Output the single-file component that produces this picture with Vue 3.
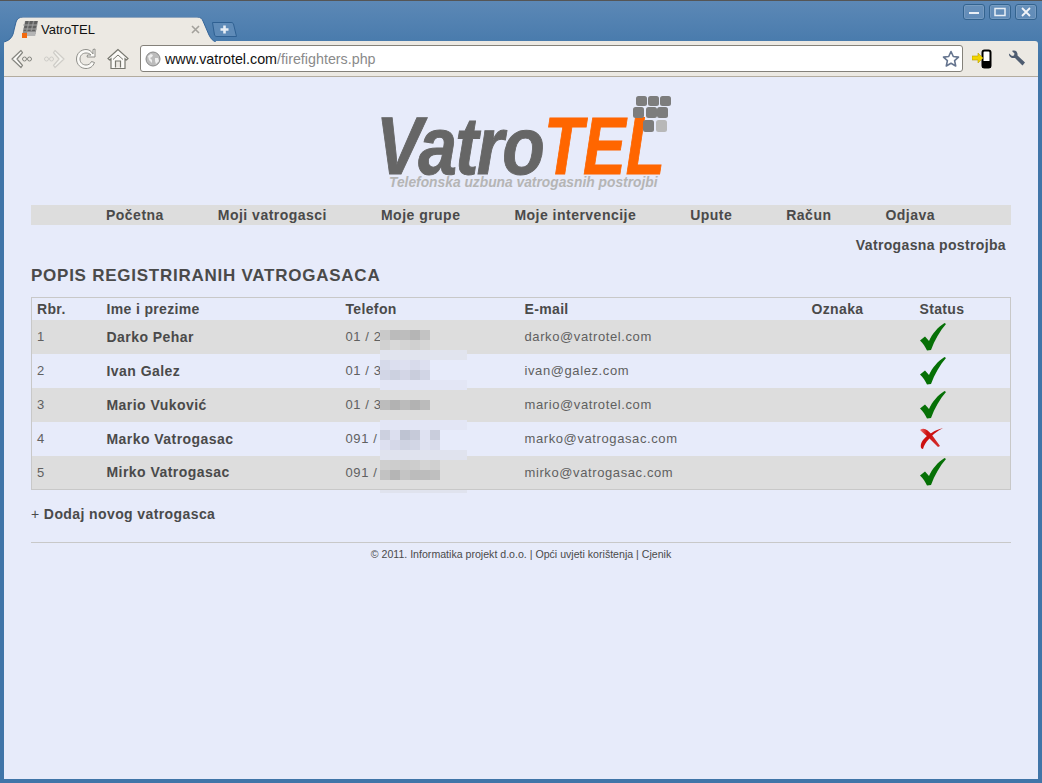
<template>
  <div class="window">
    <!-- Naslovna traka s karticama -->
    <div class="titlebar">
      <div class="tab">
        <svg class="tab-shape" width="212" height="25" viewBox="0 0 212 25">
          <path d="M0 25 C7 23 9 19 10 13 L12 5 C13 2 15 0 19 0 L193 0 C197 0 198 2 199 4 L205 18 C207 22 209 24 212 25" fill="#ece9e3" stroke="#34659a" stroke-width="1" />
        </svg>
        <svg class="favicon" width="16" height="17" viewBox="0 0 16 17">
          <path d="M3 0h13l-2.500 13H.5z" fill="#8c8c8c" />
          <path d="M3.500 0h3L4 10H1.500zM8 0h3L8.500 10h-3zM12.500 0H15.500L13 10h-3z" fill="#5f5f5f" />
          <path d="M1 7.500h14v1H1zM1 3.500h14v1H1z" fill="#a5a5a5" />
          <path d="M5 11h9l-.8 4H5z" fill="#b5b5b5" />
          <rect x="0" y="12" width="5" height="5" fill="#f26a10" />
        </svg>
        <span class="tab-title">VatroTEL</span>
        <svg class="tab-close" width="9" height="9" viewBox="0 0 9 9">
          <path d="M1 1l7 7M8 1l-7 7" stroke="#a3a19c" stroke-width="1.600" />
        </svg>
      </div>
      <div class="newtab">
        <svg width="25" height="15" viewBox="0 0 25 15">
          <path d="M.5 .5H19C20.500 .5 21 1 21.500 2L24.500 14.500H5C3.500 14.500 3 14 2.500 13Z" fill="#5f8bb8" stroke="#2f6092" />
          <path d="M12.500 3.500v8M8.500 7.500h8" stroke="#e8eef5" stroke-width="2.600" />
        </svg>
      </div>
      <div class="winbtns">
        <div class="winbtn"><svg width="12" height="10" viewBox="0 0 12 10"><path d="M1 6h10" stroke="#e9eff6" stroke-width="2" /></svg></div>
        <div class="winbtn"><svg width="12" height="10" viewBox="0 0 12 10"><rect x="1" y="1.500" width="10" height="7" fill="none" stroke="#e9eff6" stroke-width="1.500" /></svg></div>
        <div class="winbtn"><svg width="12" height="10" viewBox="0 0 12 10"><path d="M2 1l8 8M10 1l-8 8" stroke="#f2f5f9" stroke-width="1.800" /></svg></div>
      </div>
    </div>

    <!-- Alatna traka preglednika -->
    <div class="toolbar">
      <svg class="navicon" width="22" height="22" viewBox="0 0 22 22">
        <path d="M10 2.500L1 11l9 8.500 1.500-2L6 11l5.500-6.500z" fill="#fbfaf7" stroke="#85857f" stroke-width="1.200" stroke-linejoin="round" />
        <circle cx="13.500" cy="11" r="2" fill="none" stroke="#85857f" />
        <circle cx="18.500" cy="11" r="2" fill="none" stroke="#85857f" />
      </svg>
      <svg class="navicon" width="22" height="22" viewBox="0 0 22 22">
        <path d="M12 2.500l9 8.500-9 8.500-1.500-2L16 11 10.500 4.500z" fill="#f2f1ec" stroke="#cfcdc8" stroke-width="1.200" stroke-linejoin="round" />
        <circle cx="8.500" cy="11" r="2" fill="none" stroke="#cfcdc8" />
        <circle cx="3.500" cy="11" r="2" fill="none" stroke="#cfcdc8" />
      </svg>
      <svg class="navicon" width="22" height="22" viewBox="0 0 22 22">
        <path d="M18 6V1.500L20 1V9h-8l.5-2H16C14.500 5.500 13 5 11 5 7.500 5 5 7.500 5 11s2.500 6 6 6c2.500 0 4.500-1.200 5.500-3.500l3 1C18 18.500 15 20.500 11 20.500 5.800 20.500 1.500 16.500 1.500 11S5.800 1.500 11 1.500c3 0 5.300 1.500 7 4.500z" fill="#fbfaf7" stroke="#8f8f8a" />
      </svg>
      <svg class="navicon" width="22" height="22" viewBox="0 0 22 22">
        <path d="M11 1.500L1 10.500l1.500 1.500L4 10.800V20.500h14V10.800L19.500 12l1.500-1.500zM8.500 19.500V13h5v6.500" fill="#fbfaf7" stroke="#77776f" stroke-width="1.200" />
        <path d="M6 11.500L11 7l5 4.500" fill="none" stroke="#77776f" />
      </svg>
      <div class="omnibox">
        <svg width="16" height="16" viewBox="0 0 16 16">
          <circle cx="8" cy="8" r="7" fill="#bcbcbc" stroke="#8a8a8a" />
          <path d="M3 5l3-2 2 1-1 2-2 1 2 2v3L4 9zM10 7l3 0 1 3-3 3-1-3z" fill="#efefef" />
        </svg>
        <span class="url"><span class="url-host">www.vatrotel.com</span>/firefighters.php</span>
        <svg width="18" height="18" viewBox="0 0 18 18">
          <path d="M9 1.500l2.300 5 5.200.6-3.900 3.500 1.100 5.400L9 13.300 4.300 16l1.100-5.400L1.500 7.100l5.200-.6z" fill="#fff" stroke="#66758f" stroke-width="1.600" stroke-linejoin="round" />
        </svg>
      </div>
      <svg class="ext" width="20" height="20" viewBox="0 0 20 20">
        <rect x="10.500" y="1.500" width="8" height="17" rx="2" fill="#fff" stroke="#000" stroke-width="2" />
        <rect x="10" y="12" width="9" height="7" rx="1" fill="#000" />
        <path d="M0 8h6V5l5 5-5 5v-3H0z" transform="translate(0 -1)" fill="#f2d500" stroke="#b8a000" stroke-width=".6" />
      </svg>
      <svg class="wrench" width="18" height="18" viewBox="0 0 18 18">
        <path d="M1 3.500L4 6l2-.5.500-2L4 1C7 -.5 10 1.500 9.500 5.500L17 12.500 14.500 15.500 7 8C3.500 8.500 .5 6.500 1 3.500z" fill="#4e5c70" />
      </svg>
    </div>

    <!-- Sadržaj stranice -->
    <div class="page">
      <div class="logo">
        <span class="logo-word logo-vatro">Vatro</span>
        <span class="logo-word logo-tel">TEL</span>
        <svg class="logo-dots" width="38" height="36" viewBox="0 0 38 36">
          <g fill="#7d7d7d">
            <rect x="3" y="0" width="11" height="10" rx="2.500" />
            <rect x="15" y="0" width="11" height="10" rx="2.500" />
            <rect x="27" y="0" width="11" height="10" rx="2.500" />
            <rect x="0" y="11" width="11" height="11" rx="2.500" />
            <rect x="13" y="11" width="11" height="11" rx="2.500" />
            <rect x="24" y="11" width="11" height="11" rx="2.500" />
            <rect x="10" y="24" width="11" height="12" rx="2.500" />
          </g>
          <rect x="23" y="24" width="11" height="12" rx="2.500" fill="#b8b8b8" />
        </svg>
        <div class="logo-tag">Telefonska uzbuna vatrogasnih postrojbi</div>
      </div>

      <nav class="menu">
        <a v-for="item in menu" :key="item">{{ item }}</a>
      </nav>
      <div class="unit">Vatrogasna postrojba</div>
      <h1>POPIS REGISTRIRANIH VATROGASACA</h1>

      <div class="table-wrap">
        <table>
          <thead>
            <tr>
              <th class="c-nr">Rbr.</th>
              <th class="c-name">Ime i prezime</th>
              <th class="c-tel">Telefon</th>
              <th class="c-mail">E-mail</th>
              <th class="c-tag">Oznaka</th>
              <th>Status</th>
            </tr>
          </thead>
          <tbody>
            <tr v-for="f in firefighters" :key="f.nr">
              <td>{{ f.nr }}</td>
              <td class="name">{{ f.name }}</td>
              <td>{{ f.phone }}</td>
              <td>{{ f.mail }}</td>
              <td></td>
              <td class="status">
                <svg v-if="f.ok" width="26" height="28" viewBox="0 0 26 28">
                  <path d="M0 17.500L5 13.500 9 18C12 11 18 4 24.500 0L26 1C20 8 14.500 17 11 27L7 27.500C5.500 24 3 20.500 0 17.500Z" fill="#067006" />
                </svg>
                <svg v-else width="24" height="22" viewBox="0 0 24 22">
                  <defs>
                    <linearGradient id="redfade" x1="0" y1="0" x2="1" y2="0">
                      <stop offset="0" stop-color="#f07070" />
                      <stop offset="0.35" stop-color="#cc1010" />
                      <stop offset="1" stop-color="#d43030" />
                    </linearGradient>
                  </defs>
                  <path d="M0 2C4 -1 8 2 12 7L20 18 18 19 10 11C7 8 3 5 0 2Z" fill="url(#redfade)" />
                  <path d="M23 0C17 3 12 7 9 11 6 14 4 17 3 21 0 21 0 16 3 12 7 7 15 2 23 0Z" fill="#cc1010" />
                </svg>
              </td>
            </tr>
          </tbody>
        </table>
        <!-- Zamućeni brojevi telefona -->
        <div class="mosaic">
          <div v-for="(row, i) in mosaic" :key="i" class="mosaic-row">
            <span v-for="(c, j) in row.cells" :key="j" :class="{ band: row.band }" :style="{ background: c }"></span>
          </div>
        </div>
      </div>

      <div class="add"><span class="plus">+</span> Dodaj novog vatrogasca</div>
      <div class="foot">© 2011. Informatika projekt d.o.o. | Opći uvjeti korištenja | Cjenik</div>
    </div>
  </div>
</template>

<script setup>
const menu = ["Početna", "Moji vatrogasci", "Moje grupe", "Moje intervencije", "Upute", "Račun", "Odjava"];

const firefighters = [
  { nr: 1, name: "Darko Pehar", phone: "01 / 2", mail: "darko@vatrotel.com", ok: true },
  { nr: 2, name: "Ivan Galez", phone: "01 / 3", mail: "ivan@galez.com", ok: true },
  { nr: 3, name: "Mario Vuković", phone: "01 / 3", mail: "mario@vatrotel.com", ok: true },
  { nr: 4, name: "Marko Vatrogasac", phone: "091 /", mail: "marko@vatrogasac.com", ok: false },
  { nr: 5, name: "Mirko Vatrogasac", phone: "091 /", mail: "mirko@vatrogasac.com", ok: true },
];

// redovi po 10px, boje blokova
const mosaic = [
  { cells: ["#c9c9c9", "#bbbbbb", "#bdbdbd", "#b5b5b5", "#c3c3c3"] },
  { cells: ["#d1d1d1", "#d9d9d9", "#d4d4d4", "#d0d0d0", "#d6d6d6"] },
  { band: true, cells: ["#e1e4ee"] },
  { cells: ["#d6daea", "#dcdfef", "#dde0f0", "#d8dbeb", "#dde0f0"] },
  { cells: ["#d2d6e6", "#ccd1e0", "#d3d6e6", "#c9cddc", "#d1d5e5"] },
  { band: true, cells: ["#e3e6f5"] },
  { cells: [] },
  { cells: ["#bcbcbc", "#b2b2b2", "#bbbbbb", "#b2b2b2", "#bbbbbb"] },
  { cells: [] },
  { band: true, cells: ["#e3e6f5"] },
  { cells: ["#ccd0df", "#dcdfef", "#bec3d2", "#c6cad9", "#dfe2f2", "#c9cddc"] },
  { cells: ["#dde0f0", "#d5d8e8", "#cfd3e2", "#d2d6e5", "#dee1f0", "#d9dceb"] },
  { band: true, cells: ["#e0e3ee"] },
  { cells: ["#cfcfcf", "#cdcdcd", "#cbcbcb", "#cdcdcd", "#d4d4d4", "#d0d0d0"] },
  { cells: ["#c2c2c2", "#b5b5b5", "#c4c4c4", "#bcbcbc", "#bcbcbc", "#bfbfbf"] },
  { cells: [] },
  { band: true, cells: ["#e0e3ee"] },
];
</script>

<style>
html,
body {
  margin: 0;
  background: #3f72a6;
}
</style>

<style scoped>
.window {
  width: 1042px;
  height: 783px;
  box-sizing: border-box;
  padding: 1px 4px 4px;
  display: flex;
  flex-direction: column;
  overflow: hidden;
  background: linear-gradient(#5c88b6, #4075a8 60px);
  border-top: 1px solid #555;
  font-family: "Liberation Sans", Arial, sans-serif;
}

.titlebar {
  height: 39px;
  display: flex;
  align-items: flex-end;
  position: relative;
  flex: none;
}

.tab {
  position: relative;
  width: 208px;
  height: 24px;
  display: flex;
  align-items: center;
  padding-left: 18px;
  box-sizing: border-box;
  flex: none;
}

.tab-shape {
  position: absolute;
  left: 0;
  top: 0;
}

.favicon,
.tab-title,
.tab-close {
  position: relative;
}

.tab-title {
  margin-left: 3px;
  font-size: 13px;
  color: #111;
}

.tab-close {
  margin-left: 96px;
}

.newtab {
  display: flex;
  margin: 0 0 4px 0;
}

.winbtns {
  position: absolute;
  right: 1px;
  top: 2px;
  display: flex;
  gap: 4px;
}

.winbtn {
  width: 20px;
  height: 14px;
  border: 1px solid #33638f;
  border-radius: 3px;
  background: rgba(255, 255, 255, 0.08);
  box-shadow: inset 0 0 0 1px rgba(255, 255, 255, 0.12);
  display: flex;
  align-items: center;
  justify-content: center;
}

.toolbar {
  flex: none;
  height: 36px;
  background: #ece9e3;
  border-bottom: 1px solid #b3ac9f;
  border-radius: 3px 3px 0 0;
  display: flex;
  align-items: center;
  box-sizing: border-box;
  padding-left: 7px;
}

.navicon {
  margin-right: 10px;
  flex: none;
}

.omnibox {
  width: 823px;
  height: 27px;
  box-sizing: border-box;
  margin-left: 1px;
  background: #fff;
  border: 1px solid #84817a;
  border-radius: 3px;
  display: flex;
  align-items: center;
  padding: 0 2px 0 4px;
  flex: none;
}

.url {
  flex: 1;
  margin-left: 4px;
  font-size: 14.300px;
  color: #8a8a8a;
}

.url-host {
  color: #111;
}

.ext {
  margin-left: 9px;
  flex: none;
}

.wrench {
  margin-left: 16px;
  flex: none;
}

.page {
  flex: 1;
  background: #e7ebfa;
  padding: 0 27px;
  color: #4a4a4a;
}

/* logo je slobodno platno */
.logo {
  position: relative;
  width: 300px;
  height: 128px;
  margin: 0 auto;
}

.logo-word {
  position: absolute;
  top: 23px;
  font-size: 82px;
  line-height: 92px;
  font-weight: bold;
  font-style: italic;
  white-space: nowrap;
  transform-origin: left center;
}

.logo-vatro {
  left: 5px;
  color: #666;
  letter-spacing: -2px;
  transform: scaleX(0.85);
  -webkit-text-stroke: 1px #666;
}

.logo-tel {
  left: 173px;
  color: #ff6600;
  transform: scaleX(0.78);
  -webkit-text-stroke: 1px #ff6600;
}

.logo-dots {
  position: absolute;
  left: 262px;
  top: 19px;
}

.logo-tag {
  position: absolute;
  left: 18px;
  top: 98px;
  font-size: 13.800px;
  font-weight: bold;
  font-style: italic;
  color: #b5b5b5;
  white-space: nowrap;
}

.menu {
  height: 20px;
  background: #dddddd;
  display: flex;
  gap: 54px;
  padding-left: 75px;
  font-size: 14px;
  font-weight: bold;
  line-height: 20px;
  letter-spacing: 0.48px;
}

.unit {
  margin-top: 11px;
  text-align: right;
  padding-right: 5px;
  font-size: 14px;
  font-weight: bold;
  line-height: 18px;
  letter-spacing: 0.35px;
}

h1 {
  margin: 12px 0 0;
  font-size: 17px;
  line-height: 20px;
  font-weight: bold;
  letter-spacing: 0.75px;
}

.table-wrap {
  position: relative;
  margin-top: 11px;
}

table {
  width: 980px;
  border: 1px solid #c8c8c8;
  border-collapse: collapse;
  table-layout: fixed;
  font-size: 13px;
  letter-spacing: 0.6px;
  color: #606060;
}

th {
  height: 22px;
  padding: 0 0 0 5px;
  box-sizing: border-box;
  text-align: left;
  font-size: 14px;
  letter-spacing: 0.35px;
  color: #4a4a4a;
}

.c-nr {
  width: 70px;
}

.c-name {
  width: 239px;
}

.c-tel {
  width: 179px;
}

.c-mail {
  width: 287px;
}

.c-tag {
  width: 108px;
}

td {
  height: 34px;
  padding: 0 0 0 5px;
  box-sizing: border-box;
}

tbody tr:nth-child(odd) {
  background: #dddddd;
}

.name {
  font-size: 14px;
  font-weight: bold;
  letter-spacing: 0.45px;
  color: #4a4a4a;
}

.status svg {
  display: block;
}

.mosaic {
  position: absolute;
  left: 349px;
  top: 33px;
  pointer-events: none;
}

.mosaic-row {
  display: flex;
  height: 10px;
}

.mosaic-row:last-child {
  height: 3px;
}

.mosaic-row span {
  width: 10px;
}

.mosaic-row span.band {
  width: 87px;
}

.add {
  margin-top: 15px;
  font-size: 14px;
  line-height: 18px;
  font-weight: bold;
  letter-spacing: 0.4px;
}

.plus {
  font-weight: normal;
}

.foot {
  margin-top: 19px;
  padding-top: 4px;
  border-top: 1px solid #c8c8c8;
  text-align: center;
  font-size: 10.600px;
  line-height: 14px;
}
</style>
